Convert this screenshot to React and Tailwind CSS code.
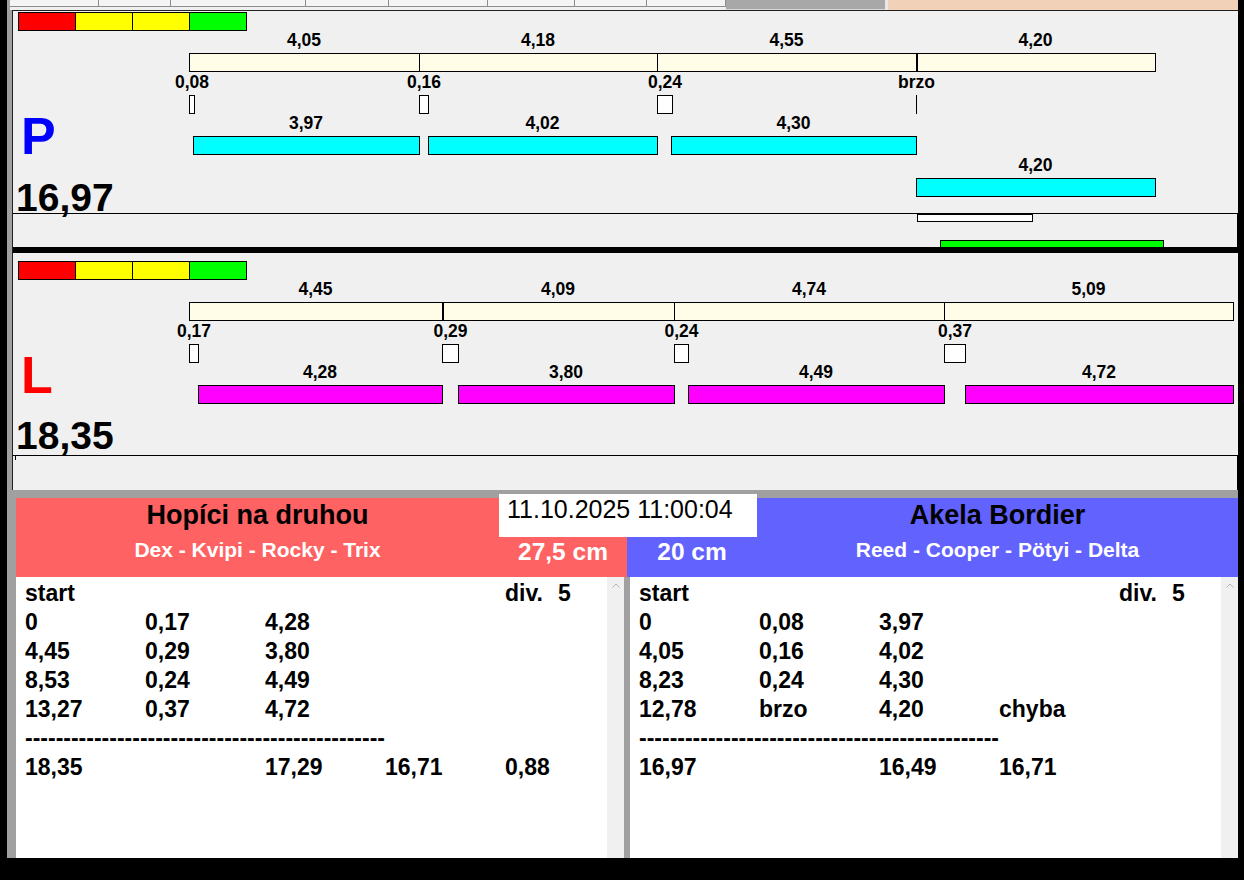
import React from 'react'

const TABS = [89, 72, 135, 83, 99, 87, 72, 79]
const STRIP = ['bg-[#ff0000]', 'bg-[#ffff00]', 'bg-[#ffff00]', 'bg-[#00ff00]']

// chart coordinates are page x; the chart's left edge sits at x = 13
const OX = 13

const PRAVA = {
  letter: 'P',
  letterClass: 'text-[#0000ff]',
  letterTop: 99,
  total: '16,97',
  totalTop: 170,
  dy: 0,
  lane: { start: 189, end: 1155, dividers: [[419, 1], [657, 1], [916, 2]] },
  laps: [['4,05', 189, 419], ['4,18', 419, 657], ['4,55', 657, 916], ['4,20', 916, 1155]],
  reactions: [['0,08', 189, 5], ['0,16', 419, 9], ['0,24', 657, 15], ['brzo', 916, 0]],
  runs: [
    ['3,97', 193, 419, 0],
    ['4,02', 428, 657, 0],
    ['4,30', 671, 916, 0],
    ['4,20', 916, 1155, 1],
  ],
  runColor: 'bg-[#00ffff]',
}

const LEVA = {
  letter: 'L',
  letterClass: 'text-[#ff0000]',
  letterTop: 96,
  total: '18,35',
  totalTop: 166,
  dy: 7,
  lane: { start: 189, end: 1233, dividers: [[442, 2], [674, 1], [944, 1]] },
  laps: [['4,45', 189, 442], ['4,09', 442, 674], ['4,74', 674, 944], ['5,09', 944, 1233]],
  reactions: [['0,17', 189, 9], ['0,29', 442, 16], ['0,24', 674, 14], ['0,37', 944, 21]],
  runs: [
    ['4,28', 198, 442, 0],
    ['3,80', 458, 674, 0],
    ['4,49', 688, 944, 0],
    ['4,72', 965, 1233, 0],
  ],
  runColor: 'bg-[#ff00ff]',
}

const LEFT_ROWS = [
  ['0', '0,17', '4,28'],
  ['4,45', '0,29', '3,80'],
  ['8,53', '0,24', '4,49'],
  ['13,27', '0,37', '4,72'],
]
const LEFT_TOTAL = ['18,35', '', '17,29', '16,71', '0,88']

const RIGHT_ROWS = [
  ['0', '0,08', '3,97'],
  ['4,05', '0,16', '4,02'],
  ['8,23', '0,24', '4,30'],
  ['12,78', 'brzo', '4,20', 'chyba'],
]
const RIGHT_TOTAL = ['16,97', '', '16,49', '16,71']

function Label({ text, cx, top }) {
  return (
    <div
      className="absolute -translate-x-1/2 whitespace-nowrap text-[17.5px] font-bold leading-[20px] text-black"
      style={{ left: cx - OX, top }}
    >
      {text}
    </div>
  )
}

function Chart({ data }) {
  const { dy, lane } = data
  return (
    <div className="relative h-[202px]">
      <div className="absolute left-[5px] flex" style={{ top: 1 + dy }}>
        {STRIP.map((c, i) => (
          <div
            key={i}
            className={`h-[19px] border-y border-l border-black ${c} ${i === 3 ? 'w-[58px] border-r' : 'w-[57px]'}`}
          />
        ))}
      </div>

      {data.laps.map(([t, a, b]) => (
        <Label key={t + a} text={t} cx={(a + b) / 2} top={19 + dy} />
      ))}

      <div
        className="absolute h-[19px] border border-black bg-[#fffde8]"
        style={{ left: lane.start - OX, top: 42 + dy, width: lane.end - lane.start + 1 }}
      />
      {lane.dividers.map(([x, w]) => (
        <div
          key={x}
          className="absolute h-[19px] bg-black"
          style={{ left: x - OX, top: 42 + dy, width: w }}
        />
      ))}

      {data.reactions.map(([t, x, w]) => (
        <React.Fragment key={t + x}>
          <Label text={t} cx={x + w / 2 + 0.5} top={61 + dy} />
          {w > 0 ? (
            <div
              className="absolute h-[19px] border border-black bg-white"
              style={{ left: x - OX, top: 84 + dy, width: w + 1 }}
            />
          ) : (
            <div className="absolute h-[19px] w-px bg-black" style={{ left: x - OX, top: 84 + dy }} />
          )}
        </React.Fragment>
      ))}

      {data.runs.map(([t, a, b, row]) => (
        <React.Fragment key={t + a}>
          <Label text={t} cx={(a + b) / 2} top={102 + dy + row * 42} />
          <div
            className={`absolute h-[19px] border border-black ${data.runColor}`}
            style={{ left: a - OX, top: 125 + dy + row * 42, width: b - a + 1 }}
          />
        </React.Fragment>
      ))}

      <div
        className={`absolute left-[8px] text-[52px] font-bold leading-[52px] ${data.letterClass}`}
        style={{ top: data.letterTop }}
      >
        {data.letter}
      </div>
      <div
        className="absolute left-[3px] text-[39px] font-bold leading-[34px] text-black"
        style={{ top: data.totalTop }}
      >
        {data.total}
      </div>
    </div>
  )
}

function TabStrip() {
  return (
    <div className="h-[10px] flex shrink-0">
      <div className="w-[3px] bg-[#a0a0a0]" />
      <div className="flex h-full bg-[#f0f0f0]">
        {TABS.map((w, i) => (
          <div key={i} style={{ width: w }} className="h-[7px] border-r border-b border-[#8c8c8c] bg-[#f4f4f4]" />
        ))}
      </div>
      <div className="w-[159px] bg-[#a8a8a8] border-b border-[#d8d8d8]" />
      <div className="w-[3px] bg-[#e8e8e8]" />
      <div className="flex-1 bg-[#f1d1b7]" />
    </div>
  )
}

function Scrollbar() {
  return (
    <div className="w-[17px] shrink-0 bg-[#f0f0f0] flex justify-center pt-[6px]">
      <svg width="8" height="5" viewBox="0 0 8 5">
        <path d="M0.5 4.5 L4 1 L7.5 4.5" fill="none" stroke="#b4b4b4" strokeWidth="1" />
      </svg>
    </div>
  )
}

function ResultList({ rows, total }) {
  return (
    <div className="w-[591px] shrink-0 bg-white pt-[2px] pl-[9px] text-[23px] font-bold leading-[29px] text-black whitespace-nowrap">
      <div className="flex">
        <span className="w-[480px] shrink-0">start</span>
        <span>
          div.<span className="ml-[15px]">5</span>
        </span>
      </div>
      {rows.map((r, i) => (
        <div key={i} className="flex">
          {r.map((c, j) => (
            <span key={j} className="w-[120px] shrink-0">{c}</span>
          ))}
        </div>
      ))}
      <div>{'-'.repeat(47)}</div>
      <div className="flex">
        {total.map((c, j) => (
          <span key={j} className="w-[120px] shrink-0">{c}</span>
        ))}
      </div>
    </div>
  )
}

function Results() {
  return (
    <div className="ml-[9px] w-[1222px] h-[360px] flex flex-col">
      <div className="h-[79px] flex shrink-0">
        <div className="w-[483px] bg-[#ff6262] flex flex-col items-center">
          <div className="h-[39px] text-[27px] font-bold leading-[34px] text-black">Hopíci na druhou</div>
          <div className="text-[21px] font-bold leading-[26px] text-white">Dex - Kvipi - Rocky - Trix</div>
        </div>
        <div className="w-[258px] flex flex-col">
          <div className="-mt-[4px] h-[43px] bg-white pl-[8px] text-[25px] leading-[31px] text-black whitespace-nowrap">
            11.10.2025 11:00:04
          </div>
          <div className="flex h-[40px]">
            <div className="w-[128px] bg-[#ff6262] text-center text-[24.5px] font-bold leading-[30px] text-white">27,5 cm</div>
            <div className="w-[130px] bg-[#6262ff] text-center text-[24.5px] font-bold leading-[30px] text-white">20 cm</div>
          </div>
        </div>
        <div className="w-[481px] bg-[#6262ff] flex flex-col items-center">
          <div className="h-[39px] text-[27px] font-bold leading-[34px] text-black">Akela Bordier</div>
          <div className="text-[21px] font-bold leading-[26px] text-white">Reed - Cooper - Pötyi - Delta</div>
        </div>
      </div>
      <div className="flex-1 flex overflow-hidden">
        <ResultList rows={LEFT_ROWS} total={LEFT_TOTAL} />
        <Scrollbar />
        <div className="w-[6px] shrink-0 bg-[#a0a0a0]" />
        <ResultList rows={RIGHT_ROWS} total={RIGHT_TOTAL} />
        <Scrollbar />
      </div>
    </div>
  )
}

export default function App() {
  return (
    <div className="w-[1244px] h-[880px] bg-black overflow-hidden font-['Liberation_Sans',Arial,sans-serif]">
      <div className="ml-[7px] w-[1231px] h-[858px] bg-[#a0a0a0] flex flex-col">
        <TabStrip />

        <div className="ml-[5px] border-l border-t border-[#202020] bg-[#f0f0f0] shrink-0">
          <Chart data={PRAVA} />
          <div className="relative h-[34px] border-t border-r border-black overflow-hidden">
            <div className="absolute left-[904px] top-0 w-[116px] h-[8px] border border-black bg-white" />
            <div className="absolute left-[927px] top-[26px] w-[224px] h-[10px] border border-black bg-[#00ff00]" />
          </div>
        </div>

        <div className="ml-[5px] h-[6px] border-l border-[#202020] bg-black shrink-0" />

        <div className="ml-[5px] border-l border-[#202020] bg-[#f0f0f0] shrink-0">
          <Chart data={LEVA} />
          <div className="relative h-[35px] border-t border-r border-black">
            <div className="absolute left-[2px] top-0 w-px h-[4px] bg-black" />
          </div>
        </div>

        <div className="h-[8px] shrink-0" />

        <Results />
      </div>
    </div>
  )
}
